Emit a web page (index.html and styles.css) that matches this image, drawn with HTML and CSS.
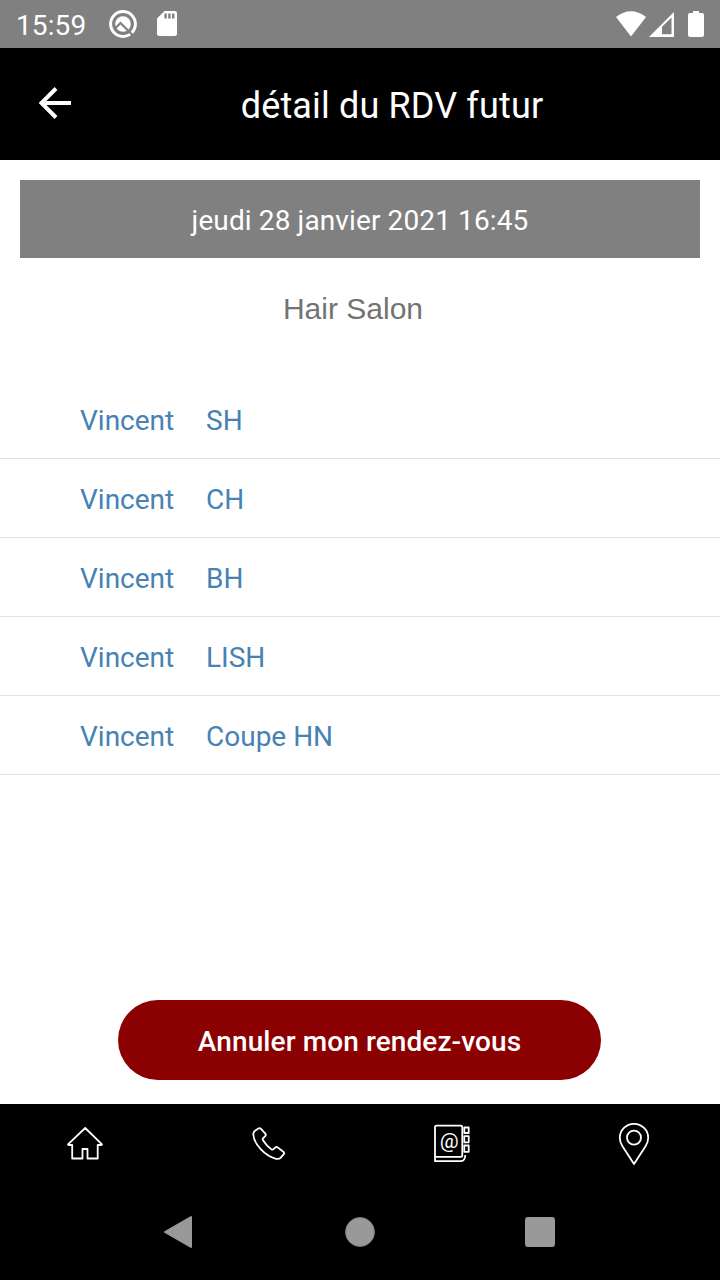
FILE: index.html
```html
<!DOCTYPE html>
<html lang="fr">
<head>
    <meta charset="UTF-8">
    <meta name="viewport" content="width=device-width, initial-scale=1">
    <title>détail du RDV futur</title>
    <link rel="stylesheet" href="styles.css">
</head>
<body>

    <div class="status-bar">
        <span class="clock">15:59</span>
        <svg class="status-q" width="28" height="28" viewBox="0 0 28 28">
            <circle cx="14" cy="14" r="12.400" fill="none" stroke="#fff" stroke-width="3"/>
            <circle cx="14" cy="14" r="7.800" fill="#fff"/>
            <path d="M6 18.500L11.500 13L23.500 25" fill="none" stroke="#808080" stroke-width="2.200"/>
        </svg>
        <svg class="status-sd" width="20" height="26" viewBox="0 0 20 26">
            <path d="M7.600 0H17.800Q20 0 20 2.200V22.800Q20 25 17.800 25H2.200Q0 25 0 22.800V7.600Z" fill="#fff"/>
            <path d="M8.600 2.500V7.500M12.400 2.500V7.500M16.200 2.500V7.500" stroke="#808080" stroke-width="2.400"/>
        </svg>
        <svg class="status-right" width="90" height="28" viewBox="0 0 90 28">
            <path d="M1 7Q16 -4.500 31 7L16 26.500Z" fill="#fff"/>
            <path d="M34 27L59 2V27Z" fill="#fff"/>
            <path d="M47 16.700L56.500 7.500V24.300H47Z" fill="#808080"/>
            <path d="M78 1H84V3H87Q89 3 89 5V25Q89 27 87 27H75Q73 27 73 25V5Q73 3 75 3H78Z" fill="#fff"/>
        </svg>
    </div>

    <header class="header">
        <svg class="back" width="34" height="34" viewBox="0 0 34 34">
            <path d="M33 17H3M18 2.500L3.500 17L18 31.500" fill="none" stroke="#fff" stroke-width="4"/>
        </svg>
        <h1>détail du RDV futur</h1>
    </header>

    <main>
        <div class="date">jeudi 28 janvier 2021 16:45</div>
        <h2>Hair Salon</h2>

        <ul class="services">
            <li><span class="who">Vincent</span><span>SH</span></li>
            <li><span class="who">Vincent</span><span>CH</span></li>
            <li><span class="who">Vincent</span><span>BH</span></li>
            <li><span class="who">Vincent</span><span>LISH</span></li>
            <li><span class="who">Vincent</span><span>Coupe HN</span></li>
        </ul>

        <button class="cancel">Annuler mon rendez-vous</button>
    </main>

    <nav class="tabs">
        <!-- home -->
        <svg width="48" height="48" viewBox="0 0 48 48">
            <path d="M24.200 8L41 24.300L40.400 25H36.700V38.500H26.500V29H21.500V38.500H11.200V25H7.500L7 24.300Z"/>
        </svg>
        <!-- phone -->
        <svg width="48" height="48" viewBox="0 0 48 48">
            <path d="M17 8.800L21.300 13.600Q22.300 15 21.200 16.200L19.200 18.200Q18.300 19.200 19 20.300Q22.600 26 27.300 29.300Q28.500 30.100 29.500 29.200L31.300 27.500Q32.600 26.500 34 27.600L39.300 31.700Q40.700 33 39.600 34.400L36.600 37.900Q35.300 39.200 32 38.800Q24 37 16.700 29.200Q9.900 21.800 9.300 14.500Q9.200 12 11 10.700L14.400 8.500Q15.900 7.700 17 8.800Z"/>
        </svg>
        <!-- address book -->
        <svg width="48" height="48" viewBox="0 0 48 48">
            <path d="M35.300 7.200V35.200Q35.300 36.800 33.700 36.800H8V7.200Q8 5.700 9.500 5.700H33.800Q35.300 5.700 35.300 7.200ZM8 36.800V41.200H34Q38 41 38.300 35"/>
            <path d="M37.300 7.500H41.700V13H37.300ZM37.300 16.200H41.700V22.300H37.300ZM37.300 25.500H41.700V31.800H37.300Z"/>
            <text x="22.200" y="28" text-anchor="middle">@</text>
        </svg>
        <!-- location -->
        <svg width="48" height="48" viewBox="0 0 48 48">
            <path d="M24 44L12.300 26Q9.800 22 9.800 17.800A14.200 14 0 0 1 38.200 17.800Q38.200 22 35.700 26Z"/>
            <circle cx="24" cy="17.600" r="7"/>
        </svg>
    </nav>

    <div class="system-nav">
        <svg width="32" height="34" viewBox="0 0 32 34">
            <path d="M3 17L29 2V32Z" fill="#999" stroke="#999" stroke-width="2" stroke-linejoin="round"/>
        </svg>
        <span class="circle"></span>
        <span class="square"></span>
    </div>

</body>
</html>
```

FILE: styles.css
```css
* {
    box-sizing: border-box;
}

body {
    margin: 0;
    width: 720px;
    height: 1280px;
    display: flex;
    flex-direction: column;
    background-color: #fff;
    font-family: Roboto, sans-serif;
    font-size: 28px;
    overflow: hidden;
}

svg {
    display: block;
    flex: none;
}

.status-bar {
    height: 48px;
    display: flex;
    align-items: center;
    padding: 0 15px 0 16px;
    background-color: #808080;
    color: #fff;
}

.clock {
    width: 93px;
    font-size: 28px;
    letter-spacing: 0.1px;
    padding-top: 2px;
}

.status-sd {
    margin-left: 20px;
}

.status-right {
    margin-left: auto;
}

.header {
    height: 112px;
    display: flex;
    align-items: center;
    padding: 0 64px 0 38px;
    background-color: #000;
    color: #fff;
}

.back {
    margin-top: -2px;
}

h1 {
    flex: 1;
    margin: 0;
    padding-left: 56px;
    padding-top: 3px;
    font-size: 36px;
    font-weight: 400;
    letter-spacing: 0.15px;
    line-height: 42px;
    text-align: center;
}

main {
    height: 944px;
    display: flex;
    flex-direction: column;
    padding: 20px 0 24px;
}

.date {
    height: 78px;
    margin: 0 20px;
    padding-top: 2px;
    background-color: #808080;
    color: #fff;
    letter-spacing: 0.12px;
    line-height: 78px;
    text-align: center;
}

h2 {
    margin: 33px 14px 0 0;
    font-family: "Liberation Sans", Arial, sans-serif;
    font-size: 30px;
    font-weight: 400;
    line-height: 36px;
    text-align: center;
    color: #737373;
}

.services {
    list-style: none;
    margin: 53px 0 0;
    padding: 0;
    color: #4682b4;
}

.services li {
    height: 79px;
    display: flex;
    padding: 2px 80px 0;
    border-bottom: 1px solid #e0e0e0;
    line-height: 78px;
}

.who {
    width: 126px;
}

.cancel {
    width: 483px;
    height: 80px;
    margin: auto auto 0 118px;
    padding: 3px 0 0;
    border: none;
    border-radius: 40px;
    background-color: #8b0000;
    color: #fff;
    font-family: inherit;
    font-size: 28px;
    font-weight: 500;
    letter-spacing: 0.1px;
}

.tabs {
    height: 80px;
    display: flex;
    justify-content: space-between;
    align-items: center;
    padding: 0 62px 0 61px;
    background-color: #000;
}

.tabs svg {
    fill: none;
    stroke: #fff;
    stroke-width: 1.8;
    stroke-linejoin: round;
}

.tabs text {
    fill: #fff;
    stroke: none;
    font-family: Roboto, sans-serif;
    font-size: 21px;
}

.system-nav {
    height: 96px;
    display: flex;
    justify-content: space-between;
    align-items: center;
    padding: 0 165px 0 162px;
    background-color: #000;
}

.circle {
    width: 30px;
    height: 30px;
    border: 1px solid #777;
    border-radius: 50%;
    background-color: #999;
}

.square {
    width: 30px;
    height: 30px;
    border-radius: 3px;
    background-color: #999;
}
```
